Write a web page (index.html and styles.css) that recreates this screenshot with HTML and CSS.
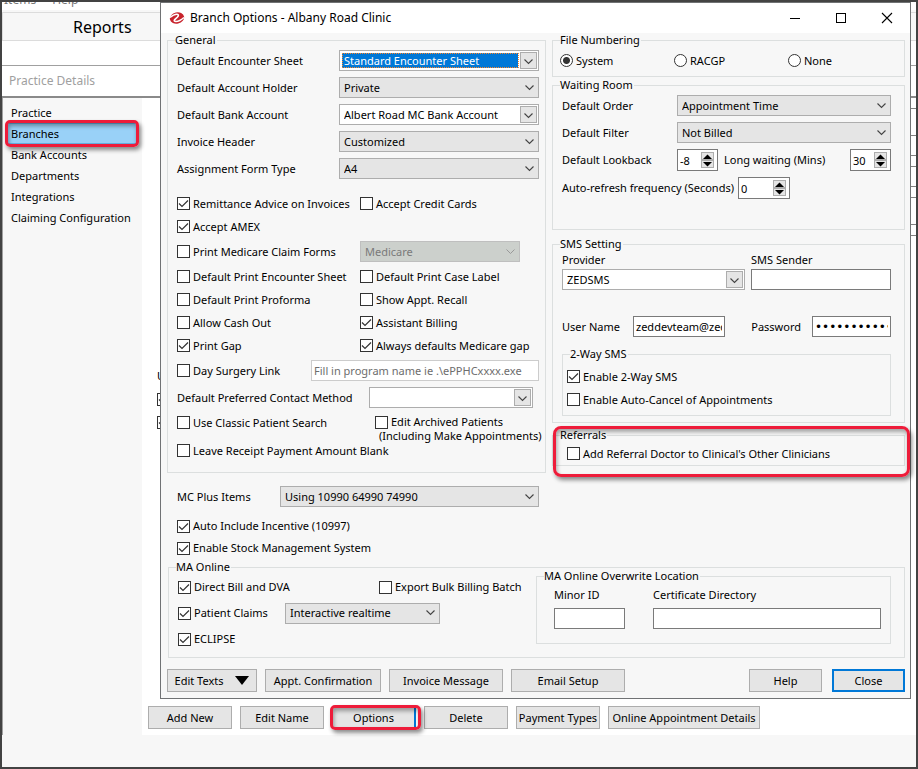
FILE: index.html
```html
<!DOCTYPE html>
<html lang="en">
<head>
  <meta charset="utf-8">
  <title>Branch Options - Albany Road Clinic</title>
  <link rel="stylesheet" href="styles.css">
</head>
<body>
  <!-- main application window -->
  <div class="app">
    <div class="menubar"><span>Items</span><span>Help</span></div>
    <div class="tabs">Reports</div>
    <div class="toolbar"></div>
    <div class="crumb">Practice Details</div>

    <div class="workspace">
      <nav class="sidebar">
        <a href="#">Practice</a>
        <a href="#" class="selected marked">Branches</a>
        <a href="#">Bank Accounts</a>
        <a href="#">Departments</a>
        <a href="#">Integrations</a>
        <a href="#">Claiming Configuration</a>
      </nav>
      <main class="content">
        <div class="behind">
          <div class="ledger">
            <i class="short"></i><i class="tall"></i><i></i><i class="short"></i><i></i><i class="short"></i><i class="tall"></i><i class="short"></i>
          </div>
          <div class="under">
            <span>Use</span>
            <input type="checkbox" aria-label="Use address" checked>
            <input type="checkbox" aria-label="Use logo" checked>
          </div>
        </div>
        <div class="actions">
          <button>Add New</button>
          <button>Edit Name</button>
          <button class="marked current">Options</button>
          <button>Delete</button>
          <button>Payment Types</button>
          <button class="wide">Online Appointment Details</button>
        </div>
      </main>
    </div>
  </div>

  <!-- dialog -->
  <div class="dialog" role="dialog" aria-labelledby="dlgTitle">
    <header class="titlebar">
      <svg class="logo" width="16" height="14" viewBox="0 0 16 14">
        <ellipse cx="8" cy="7" rx="7.2" ry="5.6" fill="#c8232c" transform="rotate(-12 8 7)"/>
        <path d="M1 6.5Q5 3 8 3.2Q10.500 3.600 8.500 6L5.500 8.800Q4.500 10.500 7 10.500Q10.500 10.500 15 6.500" fill="none" stroke="#fff" stroke-width="1.6"/>
      </svg>
      <h1 id="dlgTitle">Branch Options - Albany Road Clinic</h1>
      <div class="winbtns">
        <button aria-label="Minimize"><svg width="12" height="12"><path d="M1 6.5H11" stroke="#000"/></svg></button>
        <button aria-label="Maximize"><svg width="12" height="12"><rect x="1.5" y="1.5" width="9" height="9" fill="none" stroke="#000"/></svg></button>
        <button aria-label="Close window"><svg width="12" height="12"><path d="M1 1L11 11M11 1L1 11" stroke="#000" stroke-width="1.1"/></svg></button>
      </div>
    </header>

    <div class="body">
      <div class="columns">
        <div class="col">
          <fieldset class="general">
            <legend>General</legend>
            <div class="rows">
              <div class="row"><label for="encSheet">Default Encounter Sheet</label>
                <span class="focused"><select id="encSheet" class="combo w200"><option>Standard Encounter Sheet</option></select></span></div>
              <div class="row"><label for="accHolder">Default Account Holder</label>
                <select id="accHolder" class="w200"><option>Private</option></select></div>
              <div class="row"><label for="bankAcc">Default Bank Account</label>
                <select id="bankAcc" class="combo w200"><option>Albert Road MC Bank Account</option></select></div>
              <div class="row"><label for="invHeader">Invoice Header</label>
                <select id="invHeader" class="w200"><option>Customized</option></select></div>
              <div class="row"><label for="formType">Assignment Form Type</label>
                <select id="formType" class="w200"><option>A4</option></select></div>
            </div>

            <div class="checks">
              <label class="check"><input type="checkbox" checked>Remittance Advice on Invoices</label>
              <label class="check"><input type="checkbox">Accept Credit Cards</label>
              <label class="check full"><input type="checkbox" checked>Accept AMEX</label>
              <label class="check roomy"><input type="checkbox">Print Medicare Claim Forms</label>
              <div class="field"><select class="w160" aria-label="Claim form type" disabled><option>Medicare</option></select></div>
              <label class="check"><input type="checkbox">Default Print Encounter Sheet</label>
              <label class="check"><input type="checkbox">Default Print Case Label</label>
              <label class="check"><input type="checkbox">Default Print Proforma</label>
              <label class="check"><input type="checkbox">Show Appt. Recall</label>
              <label class="check"><input type="checkbox">Allow Cash Out</label>
              <label class="check"><input type="checkbox" checked>Assistant Billing</label>
              <label class="check"><input type="checkbox" checked>Print Gap</label>
              <label class="check"><input type="checkbox" checked>Always defaults Medicare gap</label>
            </div>
            <div class="spread">
              <label class="check roomy"><input type="checkbox">Day Surgery Link</label>
              <input type="text" class="w228 faint" aria-label="Day surgery program" placeholder="Fill in program name ie .\ePPHCxxxx.exe">
            </div>
            <div class="spread contact">
              <label for="contact">Default Preferred Contact Method</label>
              <select id="contact" class="combo w164"><option></option></select>
            </div>
            <div class="archive">
              <div class="stack">
                <label class="check"><input type="checkbox">Use Classic Patient Search</label>
                <label class="check"><input type="checkbox">Leave Receipt Payment Amount Blank</label>
              </div>
              <div class="edit-archived">
                <label class="check"><input type="checkbox">Edit Archived Patients</label>
                <span>(Including Make Appointments)</span>
              </div>
            </div>
          </fieldset>

          <div class="extras">
            <div class="row"><label for="mcPlus">MC Plus Items</label>
              <select id="mcPlus" class="w259"><option>Using 10990 64990 74990</option></select></div>
            <label class="check"><input type="checkbox" checked>Auto Include Incentive (10997)</label>
            <label class="check"><input type="checkbox" checked>Enable Stock Management System</label>
          </div>
        </div>

        <div class="col">
          <fieldset class="numbering">
            <legend>File Numbering</legend>
            <label class="check"><input type="radio" name="numbering" checked>System</label>
            <label class="check"><input type="radio" name="numbering">RACGP</label>
            <label class="check"><input type="radio" name="numbering">None</label>
          </fieldset>

          <fieldset class="waiting">
            <legend>Waiting Room</legend>
            <div class="rows">
              <div class="row"><label for="order">Default Order</label>
                <select id="order" class="w214"><option>Appointment Time</option></select></div>
              <div class="row"><label for="filter">Default Filter</label>
                <select id="filter" class="w214"><option>Not Billed</option></select></div>
              <div class="row">
                <label for="lookback">Default Lookback</label>
                <div class="pair">
                  <span class="spin"><input id="lookback" type="text" value="-8"><span class="arrows"><button aria-label="More"></button><button aria-label="Less"></button></span></span>
                  <label for="longWait">Long waiting (Mins)</label>
                  <span class="spin"><input id="longWait" type="text" value="30"><span class="arrows"><button aria-label="More"></button><button aria-label="Less"></button></span></span>
                </div>
              </div>
              <div class="row start">
                <label for="refresh">Auto-refresh frequency (Seconds)</label>
                <span class="spin big"><input id="refresh" type="text" value="0"><span class="arrows"><button aria-label="More"></button><button aria-label="Less"></button></span></span>
              </div>
            </div>
          </fieldset>

          <fieldset class="sms">
            <legend>SMS Setting</legend>
            <div class="sms-top">
              <div class="stacked grow"><label for="provider">Provider</label>
                <select id="provider" class="combo"><option>ZEDSMS</option></select></div>
              <div class="stacked w140"><label for="sender">SMS Sender</label>
                <input id="sender" type="text"></div>
            </div>
            <div class="login">
              <label for="user">User Name</label>
              <input id="user" class="w92" type="text" value="zeddevteam@zedmed.com.au">
              <label for="pass">Password</label>
              <input id="pass" class="w79" type="password" value="zedmed-sms-01">
            </div>
            <fieldset class="twoway">
              <legend>2-Way SMS</legend>
              <label class="check"><input type="checkbox" checked>Enable 2-Way SMS</label>
              <label class="check"><input type="checkbox">Enable Auto-Cancel of Appointments</label>
            </fieldset>
          </fieldset>

          <div class="referrals marked">
            <fieldset>
              <legend>Referrals</legend>
              <label class="check"><input type="checkbox">Add Referral Doctor to Clinical's Other Clinicians</label>
            </fieldset>
          </div>
        </div>
      </div>

      <fieldset class="online">
        <legend>MA Online</legend>
        <div class="online-inner">
          <div class="claims">
            <label class="check"><input type="checkbox" checked>Direct Bill and DVA</label>
            <label class="check export"><input type="checkbox">Export Bulk Billing Batch</label>
            <label class="check"><input type="checkbox" checked>Patient Claims</label>
            <select class="claim-mode" aria-label="Patient claims mode"><option>Interactive realtime</option></select>
            <label class="check"><input type="checkbox" checked>ECLIPSE</label>
          </div>
          <fieldset class="overwrite">
            <legend>MA Online Overwrite Location</legend>
            <div class="overwrite-fields">
              <div class="stacked w71"><label for="minor">Minor ID</label><input id="minor" type="text"></div>
              <div class="stacked grow"><label for="cert">Certificate Directory</label><input id="cert" type="text"></div>
            </div>
          </fieldset>
        </div>
      </fieldset>

      <footer class="buttons">
        <button class="edit-texts">Edit Texts <svg width="14" height="9"><path d="M0 0H14L7 9Z"/></svg></button>
        <button class="w116">Appt. Confirmation</button>
        <button class="w114">Invoice Message</button>
        <button class="w114">Email Setup</button>
        <span class="right">
          <button>Help</button>
          <button class="default">Close</button>
        </span>
      </footer>
    </div>
  </div>
</body>
</html>
```
FILE: styles.css
```css
* { margin: 0; padding: 0; box-sizing: border-box; }
body {
  position: relative;
  min-height: 100vh;
  font-family: "Noto Sans", "Open Sans", sans-serif;
  font-size: 11px;
  line-height: 14px;
  color: #000;
  background: #fff;
}
input, select, button { font: inherit; color: inherit; }

/* main window */
.app {
  display: flex;
  flex-direction: column;
  min-height: 100vh;
  border: 2px solid #434343;
}
.menubar {
  display: flex;
  align-items: flex-end;
  gap: 16px;
  height: 10px;
  padding: 0 2px 3px;
  font-size: 12px;
  color: #777;
  overflow: hidden;
  border-bottom: 2px solid #f7f7f7;
}
.tabs {
  height: 29px;
  padding-left: 70px;
  font-size: 16px;
  line-height: 28px;
  background: #f7f7f7;
  border: 1px solid #dcdcdc;
  border-right: 0;
}
.toolbar { height: 25px; border-bottom: 1px solid #a0a0a0; }
.crumb {
  height: 32px;
  padding-left: 7px;
  font-size: 12px;
  line-height: 30px;
  color: #a0a0a0;
  border-bottom: 2px solid #8a8a8a;
}
.workspace {
  flex: 1;
  display: flex;
  padding-bottom: 32px;
  background: #f7f7f7;
}
.sidebar {
  width: 140px;
  padding: 4px 5px 0 4px;
  border-left: 1px solid #a0a0a0;
}
.sidebar a {
  display: block;
  height: 21px;
  padding-left: 4px;
  line-height: 21px;
  white-space: nowrap;
  color: #000;
  text-decoration: none;
}
.sidebar .selected { background: #99d1f7; box-shadow: inset 0 0 0 1px #66afe0; }
.content {
  flex: 1;
  display: flex;
  flex-direction: column;
  background: #fff;
}
.behind { flex: 1; }
.ledger { width: 10px; margin-left: auto; }
.ledger i { display: block; height: 20px; border-bottom: 1px solid #808080; }
.ledger .tall { height: 27px; }
.ledger .short { height: 11px; }
.under {
  display: flex;
  flex-direction: column;
  gap: 10px;
  width: 16px;
  margin: 133px 0 0 15px;
  overflow: hidden;
}
.actions { display: flex; gap: 8px; padding: 0 6px 6px; }
.actions button { width: 84px; }
.actions .wide { width: 152px; }
.actions .current { border-right: 2px solid #0078d7; }

/* red call-out frame */
.marked { position: relative; }
.marked::after {
  content: "";
  position: absolute;
  inset: -3px -2px;
  border: 3px solid #ee1c3a;
  border-radius: 5px;
  box-shadow: 2px 3px 4px rgba(0,0,0,0.45), inset 1px 3px 4px rgba(0,0,0,0.35);
  pointer-events: none;
}
button.marked::after { inset: -2px -7px -2px -3px; }

/* dialog */
.dialog {
  position: absolute;
  top: 2px;
  left: 160px;
  right: 7px;
  background: #f7f7f7;
  border: 1px solid #707274;
}
.titlebar {
  display: flex;
  align-items: center;
  height: 30px;
  padding-left: 8px;
  background: #fff;
}
.titlebar h1 {
  flex: 1;
  margin-left: 5px;
  font-size: 12px;
  font-weight: 400;
}
.winbtns { display: flex; }
.winbtns button {
  display: flex;
  align-items: center;
  justify-content: center;
  width: 46px;
  height: 28px;
  border: 0;
  background: none;
}
.body { padding: 0 5px 6px 6px; }
.columns {
  display: grid;
  grid-template-columns: minmax(0, 379fr) minmax(0, 353fr);
  gap: 6px;
}

/* group boxes, legends always start 7px from the frame */
fieldset {
  --inset: 9px;
  min-width: 0;
  padding-left: var(--inset);
  border: 1px solid #dcdfdf;
}
legend { margin-left: calc(7px - var(--inset)); padding: 0 1px 0 0; }
.general { padding: 3px 6px 10px var(--inset); }
.numbering { --inset: 7px; display: flex; padding-top: 2px; padding-bottom: 4px; }
.numbering .check { width: 114px; }
.waiting { margin-top: 1px; padding: 3px 13px 30px var(--inset); }
.sms { margin-top: 7px; padding: 2px 13px 6px var(--inset); }
.twoway { --inset: 4px; margin-top: 10px; padding-top: 4px; padding-bottom: 4px; }
.referrals { margin-top: 5px; }
.referrals fieldset { --inset: 14px; }
.referrals::after { inset: -2px -5px -11px 1px; border-radius: 8px; }

/* rows */
.rows { display: flex; flex-direction: column; gap: 6px; }
.row, .spread, .pair, .login {
  display: flex;
  align-items: center;
  justify-content: space-between;
}
label { white-space: nowrap; }
.row.start { justify-content: flex-start; gap: 4px; }
.pair { width: 214px; }
.pair label { margin: 0 auto 0 6px; }
.spread { height: 27px; }
.contact { padding-right: 6px; }
.checks {
  display: grid;
  grid-template-columns: 183px 1fr;
  margin-top: 13px;
}
.check {
  display: flex;
  align-items: center;
  gap: 3px;
  height: 23px;
}
.check.full { grid-column: 1 / 3; }
.check.roomy { height: 27px; }
.field { display: flex; align-items: center; }
.archive { display: flex; }
.stack { flex: none; display: flex; flex-direction: column; gap: 5px; width: 198px; }
.edit-archived { padding-top: 4px; white-space: nowrap; }
.edit-archived .check { height: 14px; }
.edit-archived span { display: block; margin-left: 4px; }
.extras { padding: 13px 7px 0 10px; }
.extras .row { margin-bottom: 8px; }
.extras .check { height: 22px; }
.stacked { display: flex; flex-direction: column; gap: 2px; }
.grow { flex: 1; }
.sms-top { display: flex; gap: 6px; }
.login { margin-top: 26px; }
.login label[for="user"] { width: 71px; }
.login label[for="pass"] { margin: 0 11px 0 auto; }

/* MA Online */
.online { margin: 1px 0 0 1px; padding: 0 13px 5px var(--inset); }
.online-inner { display: flex; justify-content: space-between; align-items: flex-start; }
.claims {
  display: grid;
  grid-template-columns: 107px 94px auto;
  grid-auto-rows: 26px;
  align-items: center;
}
.claims .export { grid-column: 3; }
.claims .claim-mode { grid-column: 2 / 4; width: 155px; }
.overwrite {
  --inset: 17px;
  flex: none;
  width: 355px;
  margin-top: -5px;
  padding: 5px 9px 14px var(--inset);
}
.overwrite legend { margin-left: -10px; }
.overwrite-fields { display: flex; gap: 28px; }
.overwrite-fields .stacked { gap: 6px; }

/* drop-downs */
select {
  appearance: none;
  height: 21px;
  padding: 0 22px 0 4px;
  border: 1px solid #adadad;
  border-radius: 0;
  background: #e5e5e5 url("data:image/svg+xml,%3Csvg xmlns='http://www.w3.org/2000/svg' width='9' height='6'%3E%3Cpath d='M.5 .5L4.5 4.5L8.5 .5' fill='none' stroke='%23444' stroke-width='1.1'/%3E%3C/svg%3E") no-repeat right 4px center;
}
select.combo {
  background: #fff url("data:image/svg+xml,%3Csvg xmlns='http://www.w3.org/2000/svg' width='17' height='17'%3E%3Crect x='.5' y='.5' width='16' height='16' fill='%23e5e5e5' stroke='%23adadad'/%3E%3Cpath d='M4.5 7.5L8.5 11.5L12.5 7.5' fill='none' stroke='%23444' stroke-width='1.1'/%3E%3C/svg%3E") no-repeat right 1px center;
}
select:disabled {
  opacity: 1;
  color: #7a7a7a;
  background-color: #ccd0cc;
  border-color: #bfbfbf;
  background-image: url("data:image/svg+xml,%3Csvg xmlns='http://www.w3.org/2000/svg' width='9' height='6'%3E%3Cpath d='M.5 .5L4.5 4.5L8.5 .5' fill='none' stroke='%23999'/%3E%3C/svg%3E");
}
.focused { position: relative; display: flex; }
.focused select { color: #fff; }
.focused select.combo {
  background:
    url("data:image/svg+xml,%3Csvg xmlns='http://www.w3.org/2000/svg' width='17' height='17'%3E%3Crect x='.5' y='.5' width='16' height='16' fill='%23e5e5e5' stroke='%23adadad'/%3E%3Cpath d='M4.5 7.5L8.5 11.5L12.5 7.5' fill='none' stroke='%23444' stroke-width='1.1'/%3E%3C/svg%3E") no-repeat right 1px center,
    linear-gradient(#0078d7, #0078d7) no-repeat 2px 2px / 176px 15px #fff;
}
.focused::after {
  content: "";
  position: absolute;
  inset: 3px 20px 3px 3px;
  border: 1px dotted #ff8728;
  pointer-events: none;
}

/* text boxes */
input[type="text"], input[type="password"] {
  height: 21px;
  padding: 0 2px;
  background: #fff;
  border: 1px solid #7a7a7a;
}
input[type="password"] { font-family: "DejaVu Sans", sans-serif; font-size: 12px; }
input.faint { border-color: #ccc; }
input::placeholder { color: #6d6d6d; }

/* tick boxes and radios */
input[type="checkbox"], input[type="radio"] {
  appearance: none;
  flex: none;
  width: 13px;
  height: 13px;
  background: #fff center no-repeat;
  border: 1px solid #333;
}
input[type="radio"] { border-radius: 50%; }
input[type="checkbox"]:checked {
  background-image: url("data:image/svg+xml,%3Csvg xmlns='http://www.w3.org/2000/svg' width='11' height='11'%3E%3Cpath d='M1 5.5L4 8.5L10 2.5' fill='none' stroke='%23333' stroke-width='1.2'/%3E%3C/svg%3E");
}
input[type="radio"]:checked { background-image: radial-gradient(circle, #333 3px, transparent 4px); }

/* spinners */
.spin {
  display: flex;
  align-items: center;
  width: 41px;
  height: 22px;
  padding-right: 3px;
  background: #fff;
  border: 1px solid #7a7a7a;
}
.spin.big { width: 52px; }
.spin input[type="text"] { flex: 1; width: 0; height: 18px; border: 0; }
.arrows { display: flex; flex-direction: column; }
.arrows button {
  width: 13px;
  height: 8px;
  border: 1px solid #adadad;
  background: #e5e5e5 url("data:image/svg+xml,%3Csvg xmlns='http://www.w3.org/2000/svg' width='9' height='5'%3E%3Cpath d='M0 5L4.5 .5L9 5Z'/%3E%3C/svg%3E") center no-repeat;
}
.arrows button:last-child {
  background-image: url("data:image/svg+xml,%3Csvg xmlns='http://www.w3.org/2000/svg' width='9' height='5'%3E%3Cpath d='M0 0L4.5 4.5L9 0Z'/%3E%3C/svg%3E");
}

/* push buttons */
.actions button, .buttons button {
  height: 23px;
  white-space: nowrap;
  background: #e5e5e5;
  border: 1px solid #adadad;
}
.actions .current { border-right: 2px solid #0078d7; }
.buttons { display: flex; gap: 8px; margin-top: 11px; }
.buttons .edit-texts {
  display: flex;
  align-items: center;
  justify-content: center;
  gap: 12px;
  width: 90px;
}
.buttons .right { display: flex; gap: 10px; margin-left: auto; }
.buttons .right button { width: 73px; }
.buttons .default { border: 2px solid #0078d7; }

/* shared control widths */
.w71 { width: 71px; }
.w79 { width: 79px; }
.w92 { width: 92px; }
.w114 { width: 114px; }
.w116 { width: 116px; }
.w140 { width: 140px; }
.w160 { width: 160px; }
.w164 { width: 164px; }
.w200 { width: 200px; }
.w214 { width: 214px; }
.w228 { width: 228px; }
.w259 { width: 259px; }
```
